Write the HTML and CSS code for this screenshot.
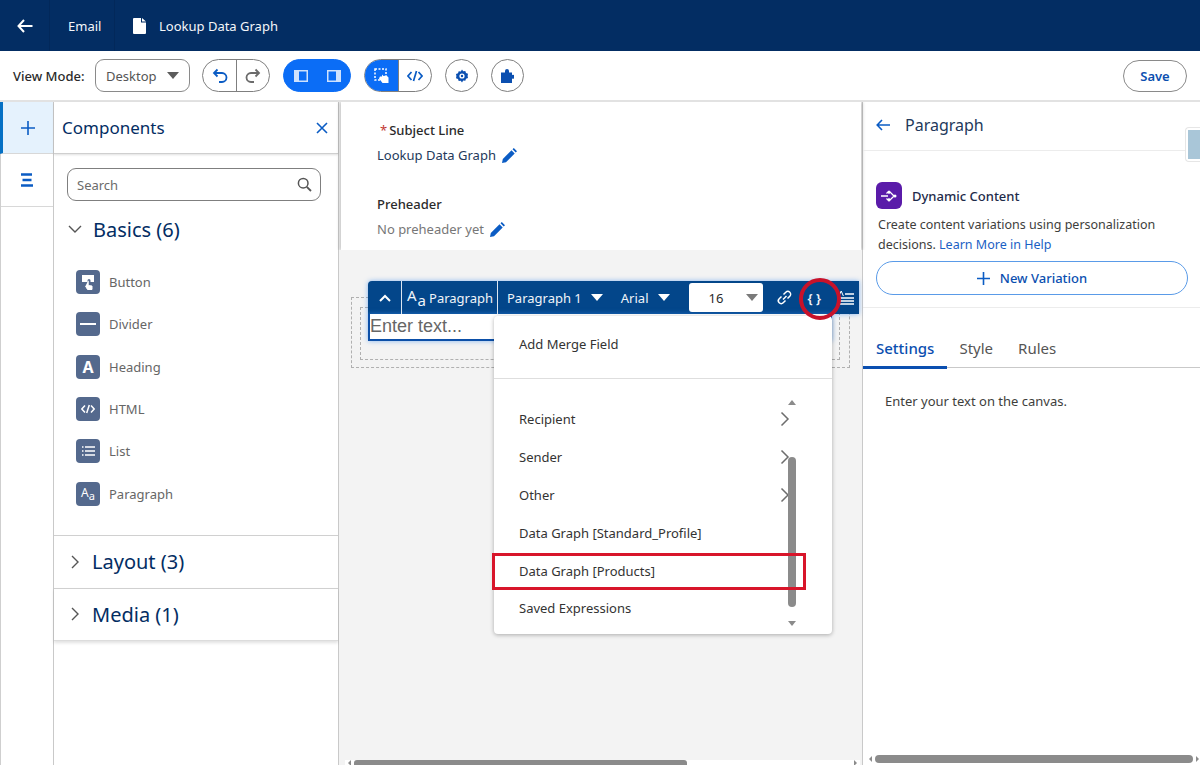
FILE: index.html
```html
<!DOCTYPE html>
<html lang="en">

<head>
    <meta charset="UTF-8">
    <title>Lookup Data Graph</title>
    <link rel="stylesheet" href="styles.css">
</head>

<body>

    <header class="topbar">
        <div class="top-back">
            <svg width="16" height="14" viewBox="0 0 16 14"><path d="M7 1 1.5 7 7 13M2 7h13.5" fill="none" stroke="#fff" stroke-width="2"/></svg>
        </div>
        <div class="top-cell">Email</div>
        <div class="top-title">
            <svg width="13" height="16" viewBox="0 0 13 16"><path d="M1 0h7v4.500h5V15a1 1 0 0 1-1 1H1a1 1 0 0 1-1-1V1a1 1 0 0 1 1-1ZM9 0l4 3.500H9Z" fill="#fff"/></svg>
            <span>Lookup Data Graph</span>
        </div>
    </header>

    <div class="toolbar">
        <span class="view-label">View Mode:</span>
        <div class="select">
            <span>Desktop</span>
            <i class="caret"></i>
        </div>
        <div class="group">
            <div class="seg">
                <svg width="16" height="16" viewBox="0 0 16 16"><path d="M5.500 1.500 2 5l3.500 3.500M2.500 5H10a4.500 4.500 0 0 1 0 9H7" fill="none" stroke="#0b5cc4" stroke-width="1.800"/></svg>
            </div>
            <div class="seg">
                <svg width="16" height="16" viewBox="0 0 16 16"><path d="M10.500 1.500 14 5l-3.500 3.500M13.500 5H6a4.500 4.500 0 0 0 0 9h3" fill="none" stroke="#6b6b6b" stroke-width="1.800"/></svg>
            </div>
        </div>
        <div class="group group-blue">
            <div class="seg">
                <svg width="14" height="12" viewBox="0 0 14 12"><rect width="14" height="12" fill="#cfe2fd"/><rect x="5" y="1.500" width="7.500" height="9" fill="#0b6df6"/></svg>
            </div>
            <div class="seg">
                <svg width="14" height="12" viewBox="0 0 14 12"><rect width="14" height="12" fill="#cfe2fd"/><rect x="1.500" y="1.500" width="7.500" height="9" fill="#0b6df6"/></svg>
            </div>
        </div>
        <div class="group group-half">
            <div class="seg seg-on">
                <svg width="16" height="16" viewBox="0 0 16 16"><rect x="1" y="1" width="11" height="11" fill="none" stroke="#fff" stroke-width="1.500" stroke-dasharray="2 1.500"/><path d="M6 8.500h2V6.500l1.500 1.500 3-.5 2 2V15H8.500L5 10.500Z" fill="#fff"/></svg>
            </div>
            <div class="seg">
                <svg width="16" height="12" viewBox="0 0 16 12"><path d="M4.500 2 1 6l3.500 4M11.500 2 15 6l-3.500 4M9.500 1 6.500 11" fill="none" stroke="#0b5cc4" stroke-width="1.700"/></svg>
            </div>
        </div>
        <div class="round">
            <svg width="14" height="14" viewBox="0 0 14 14"><path d="M7 .500l1.200 1.700 2.100-.3.700 2 2 .8-.4 2.300.4 2-2 .8-.7 2-2.100-.3L7 13.500l-1.200-1.700-2.100.3-.7-2-2-.8.4-2.300-.4-2 2-.8.700-2 2.100.3Z" fill="#0b4fb0"/><circle cx="7" cy="7" r="2.600" fill="#fff"/><circle cx="7" cy="7" r="1.200" fill="#0b4fb0"/></svg>
        </div>
        <div class="round round-last">
            <svg width="13" height="15" viewBox="0 0 13 15"><path d="M0 4.500h4V3a2 2 0 1 1 4 0v1.500h3V7a2 2 0 1 1 0 3.500V15H0Z" fill="#0b4fb0"/></svg>
        </div>
        <div class="save">Save</div>
    </div>

    <main class="workspace">

        <nav class="rail">
            <div class="rail-cell rail-on">
                <svg width="14" height="14" viewBox="0 0 14 14"><path d="M7 0v14M0 7h14" stroke="#0b5cc4" stroke-width="1.600"/></svg>
            </div>
            <div class="rail-cell">
                <svg width="14" height="14" viewBox="0 0 14 14"><path d="M1 1.500h11M2.500 7h9M1 12.500h12" stroke="#0b5cc4" stroke-width="2.400"/></svg>
            </div>
        </nav>

        <aside class="components">
            <div class="comp-head">
                <h2>Components</h2>
                <svg width="12" height="12" viewBox="0 0 12 12"><path d="M1 1l10 10M11 1 1 11" stroke="#0b5cc4" stroke-width="1.600"/></svg>
            </div>
            <div class="comp-body">
                <div class="search">
                    <span>Search</span>
                    <svg width="15" height="15" viewBox="0 0 15 15"><circle cx="6.200" cy="6.200" r="4.800" fill="none" stroke="#555" stroke-width="1.500"/><path d="M9.800 9.800 14 14" stroke="#555" stroke-width="1.800"/></svg>
                </div>
                <div class="sec-title sec-open">
                    <svg width="14" height="8" viewBox="0 0 14 8"><path d="M1 1l6 6 6-6" fill="none" stroke="#555" stroke-width="1.400"/></svg>
                    <span>Basics (6)</span>
                </div>
                <ul class="items">
                    <li>
                        <span class="ico"><svg width="14" height="16" viewBox="0 0 14 16"><path d="M1 1h12v7H9.500V6.500a1.500 1.500 0 0 0-3 0V8H1Z" fill="#fff"/><path d="M7.200 6.800v4.700l3.800.5v3.500H6.500L4.500 12" fill="#fff" stroke="#fff"/></svg></span>
                        Button
                    </li>
                    <li>
                        <span class="ico"><svg width="16" height="2" viewBox="0 0 16 2"><rect width="16" height="2" fill="#fff"/></svg></span>
                        Divider
                    </li>
                    <li>
                        <span class="ico ico-a">A</span>
                        Heading
                    </li>
                    <li>
                        <span class="ico"><svg width="14" height="10" viewBox="0 0 14 10"><path d="M4 1.500.8 5 4 8.500M10 1.500 13.200 5 10 8.500M8.300 1 5.700 9" fill="none" stroke="#fff" stroke-width="1.500"/></svg></span>
                        HTML
                    </li>
                    <li>
                        <span class="ico"><svg width="13" height="10" viewBox="0 0 13 10"><path d="M3 1h10M3 5h10M3 9h10M0 1h1.500M0 5h1.500M0 9h1.500" stroke="#fff" stroke-width="1.400"/></svg></span>
                        List
                    </li>
                    <li>
                        <span class="ico ico-aa">A<small>a</small></span>
                        Paragraph
                    </li>
                </ul>
                <div class="sec-title sec-row">
                    <svg width="8" height="14" viewBox="0 0 8 14"><path d="M1 1l6 6-6 6" fill="none" stroke="#555" stroke-width="1.400"/></svg>
                    <span>Layout (3)</span>
                </div>
                <div class="sec-title sec-row sec-last">
                    <svg width="8" height="14" viewBox="0 0 8 14"><path d="M1 1l6 6-6 6" fill="none" stroke="#555" stroke-width="1.400"/></svg>
                    <span>Media (1)</span>
                </div>
            </div>
        </aside>

        <section class="canvas">
            <div class="meta">
                <div class="meta-label"><b class="req">*</b>Subject Line</div>
                <div class="meta-value">
                    Lookup Data Graph
                    <svg class="pencil" width="15" height="15" viewBox="0 0 15 15"><path d="M0 15l.8-4L9.500 2.300l3.200 3.200L4 14.200ZM10.500 1.300 11.800 0 15 3.200l-1.300 1.300Z" fill="#0b5cc4"/></svg>
                </div>
                <div class="meta-label meta-second">Preheader</div>
                <div class="meta-value meta-empty">
                    No preheader yet
                    <svg class="pencil" width="15" height="15" viewBox="0 0 15 15"><path d="M0 15l.8-4L9.500 2.300l3.200 3.200L4 14.200ZM10.500 1.300 11.800 0 15 3.200l-1.300 1.300Z" fill="#0b5cc4"/></svg>
                </div>
            </div>

            <div class="stage">
                <div class="drop-outer">
                    <div class="drop-inner"></div>
                </div>

                <div class="editor">
                    <div class="rte">
                        <div class="rte-up">
                            <svg width="12" height="8" viewBox="0 0 12 8"><path d="M1 7l5-5 5 5" fill="none" stroke="#fff" stroke-width="2"/></svg>
                        </div>
                        <div class="rte-type"><span class="rte-aa">A<small>a</small></span> Paragraph</div>
                        <div class="rte-pick">Paragraph 1 <i class="caret caret-white"></i></div>
                        <div class="rte-pick rte-font">Arial <i class="caret caret-white"></i></div>
                        <div class="rte-size">
                            <span>16</span>
                            <i class="caret caret-size"></i>
                        </div>
                        <svg class="rte-link" width="15" height="15" viewBox="0 0 15 15"><path d="M6 9.500l3.500-3.500M6.500 4.500 8.800 2.200a2.800 2.800 0 0 1 4 4L10.500 8.500M8.500 10.500l-2.300 2.300a2.800 2.800 0 0 1-4-4L4.500 6.500" fill="none" stroke="#fff" stroke-width="1.500"/></svg>
                        <span class="rte-braces">{ }</span>
                        <div class="rte-align">
                            <svg width="16" height="14" viewBox="0 0 16 14"><path d="M0 7h16M0 10h16M0 13h16" stroke="#fff" stroke-width="1.400"/><path d="M1 5l2.200-5 2.200 5" fill="none" stroke="#fff" stroke-width="1"/><path d="M7 3h9" stroke="#fff" stroke-width="1.400"/></svg>
                        </div>
                    </div>
                    <div class="text-box">Enter text...</div>
                </div>

                <div class="merge-menu">
                    <div class="merge-top">Add Merge Field</div>
                    <div class="merge-list">
                        <ul>
                            <li>Recipient <svg width="10" height="16" viewBox="0 0 10 16"><path d="M1.500 1.500 8 8l-6.500 6.500" fill="none" stroke="#6d6d6d" stroke-width="1.500"/></svg></li>
                            <li>Sender <svg width="10" height="16" viewBox="0 0 10 16"><path d="M1.500 1.500 8 8l-6.500 6.500" fill="none" stroke="#6d6d6d" stroke-width="1.500"/></svg></li>
                            <li>Other <svg width="10" height="16" viewBox="0 0 10 16"><path d="M1.500 1.500 8 8l-6.500 6.500" fill="none" stroke="#6d6d6d" stroke-width="1.500"/></svg></li>
                            <li>Data Graph [Standard_Profile]</li>
                            <li>Data Graph [Products]</li>
                            <li>Saved Expressions</li>
                        </ul>
                        <div class="vscroll">
                            <i class="tri-up"></i>
                            <div class="vtrack"><div class="vthumb"></div></div>
                            <i class="tri-down"></i>
                        </div>
                    </div>
                </div>

                <div class="mark-rect"></div>
                <div class="mark-circle"></div>

                <div class="hscroll hscroll-canvas">
                    <i class="tri-left"></i>
                    <div class="hthumb"></div>
                    <i class="tri-right"></i>
                </div>
            </div>
        </section>

        <aside class="props">
            <div class="props-head">
                <svg width="14" height="12" viewBox="0 0 14 12"><path d="M6 1 1.200 6 6 11M1.500 6H14" fill="none" stroke="#0b5cc4" stroke-width="1.600"/></svg>
                <h2>Paragraph</h2>
            </div>
            <div class="collapse"><i></i></div>
            <div class="dyn">
                <div class="dyn-title">
                    <span class="dyn-ico">
                        <svg width="18" height="16" viewBox="0 0 18 16"><path d="M1 8h7M9 3l5 5-5 5M9 3 6.500 5.500M9 13l-2.500-2.500M9 3v3M9 13v-3" fill="none" stroke="#fff" stroke-width="1.300"/><circle cx="15" cy="8" r="1.500" fill="#fff"/></svg>
                    </span>
                    <b>Dynamic Content</b>
                </div>
                <p>Create content variations using personalization decisions. <a>Learn More in Help</a></p>
                <div class="variation">
                    <svg width="13" height="13" viewBox="0 0 13 13"><path d="M6.500 0v13M0 6.500h13" stroke="#0b5cc4" stroke-width="1.600"/></svg>
                    New Variation
                </div>
            </div>
            <div class="tabs">
                <span class="tab tab-on">Settings</span>
                <span class="tab">Style</span>
                <span class="tab">Rules</span>
            </div>
            <div class="tab-body">Enter your text on the canvas.</div>
            <div class="hscroll hscroll-props">
                <i class="tri-left"></i>
                <div class="hthumb"></div>
                <i class="tri-right"></i>
            </div>
        </aside>

    </main>

</body>

</html>
```

FILE: styles.css
```css
* {
    box-sizing: border-box;
}

html,
body {
    height: 100%;
}

body {
    margin: 0;
    display: flex;
    flex-direction: column;
    height: 765px;
    overflow: hidden;
    background-color: #fff;
    color: #181818;
    font-family: "Noto Sans", "Open Sans", sans-serif;
    font-size: 13px;
}

h2 {
    margin: 0;
    font-weight: 400;
}

ul {
    list-style: none;
    margin: 0;
    padding: 0;
}

/* top navy bar */
.topbar {
    display: flex;
    align-items: stretch;
    height: 51px;
    flex-shrink: 0;
    background-color: #032d63;
    color: #f3f6fa;
}

.top-back {
    display: flex;
    justify-content: center;
    align-items: center;
    width: 50px;
    border-right: 1px solid #02285a;
}

.top-cell {
    display: flex;
    align-items: center;
    width: 65px;
    padding-left: 18px;
    border-right: 1px solid #02285a;
}

.top-title {
    display: flex;
    align-items: center;
    gap: 13px;
    padding-left: 18px;
}

/* editor toolbar */
.toolbar {
    display: flex;
    align-items: center;
    height: 51px;
    flex-shrink: 0;
    padding: 0 13px;
    border-bottom: 2px solid #e2e2e2;
}

.view-label {
    width: 82px;
    font-weight: 500;
    color: #2b2b2b;
}

.select {
    display: flex;
    align-items: center;
    justify-content: space-between;
    width: 95px;
    height: 33px;
    padding: 0 10px 0 10px;
    border: 1px solid #8a8a8a;
    border-radius: 9px;
    color: #555;
}

.caret {
    display: inline-block;
    width: 0;
    height: 0;
    border-left: 6px solid transparent;
    border-right: 6px solid transparent;
    border-top: 7px solid #5c5c5c;
}

.group {
    display: flex;
    height: 33px;
    margin-left: 12px;
    border: 1px solid #7f7f7f;
    border-radius: 17px;
    overflow: hidden;
}

.group + .group {
    margin-left: 13px;
}

.seg {
    display: flex;
    justify-content: center;
    align-items: center;
    width: 33px;
}

.seg + .seg {
    border-left: 1px solid #7f7f7f;
}

.group-blue {
    background-color: #0b6df6;
    border-color: #0b6df6;
}

.group-blue .seg + .seg {
    border-left: 0;
}

.seg-on {
    background-color: #0b6df6;
}

.round {
    display: flex;
    justify-content: center;
    align-items: center;
    width: 33px;
    height: 33px;
    margin-left: 13px;
    border: 1px solid #7f7f7f;
    border-radius: 50%;
}

.save {
    display: flex;
    justify-content: center;
    align-items: center;
    width: 64px;
    height: 32px;
    margin-left: auto;
    border: 1px solid #8a8a8a;
    border-radius: 16px;
    color: #0b4fb0;
    font-weight: 600;
}

/* three columns under the toolbar */
.workspace {
    display: flex;
    flex: 1;
    min-height: 0;
}

.rail {
    width: 54px;
    flex-shrink: 0;
    border-left: 1px solid #cfcfcf;
    border-right: 1px solid #c9c9c9;
}

.rail-cell {
    display: flex;
    justify-content: center;
    align-items: center;
    height: 53px;
    border-bottom: 1px solid #d8d8d8;
}

.rail-on {
    height: 52px;
    background-color: #e5f2fd;
    border-left: 3px solid #0570c4;
    margin-left: -1px;
}

.components {
    width: 285px;
    flex-shrink: 0;
    border-right: 1px solid #c9c9c9;
}

.comp-head {
    display: flex;
    justify-content: space-between;
    align-items: center;
    height: 52px;
    padding: 0 10px 0 8px;
    border-bottom: 1px solid #cfcfcf;
    box-shadow: 0 1px 2px rgba(0, 0, 0, 0.12);
}

.comp-head h2 {
    font-size: 17px;
    color: #032d63;
}

.comp-body {
    padding-top: 14px;
}

.search {
    display: flex;
    justify-content: space-between;
    align-items: center;
    height: 33px;
    margin: 0 17px 0 13px;
    padding: 0 8px 0 9px;
    border: 1px solid #7f7f7f;
    border-radius: 9px;
    color: #6b6b6b;
}

.sec-title {
    display: flex;
    align-items: center;
    font-size: 20px;
    color: #032d63;
}

.sec-title span {
    margin-left: 11px;
}

.sec-open {
    height: 56px;
    padding-left: 14px;
}

.sec-row {
    height: 53px;
    padding-left: 17px;
    border-top: 1px solid #d0d0d0;
}

.sec-row span {
    margin-left: 13px;
}

.sec-row:first-of-type {
    border-top-width: 2px;
}

.sec-last {
    border-bottom: 1px solid #dcdcdc;
    box-shadow: 0 2px 3px rgba(0, 0, 0, 0.12);
}

.items {
    padding: 4px 0 20px 22px;
}

.items li {
    display: flex;
    align-items: center;
    gap: 9px;
    height: 42.300px;
    color: #666;
}

.ico {
    display: flex;
    justify-content: center;
    align-items: center;
    width: 24px;
    height: 24px;
    border-radius: 4px;
    background-color: #54698d;
    color: #fff;
}

.ico-a {
    font-size: 16px;
    font-weight: 700;
}

.ico-aa {
    font-size: 12px;
    padding-bottom: 3px;
}

.ico-aa small {
    font-size: 11px;
    margin-top: 6px;
}

/* canvas */
.canvas {
    display: flex;
    flex-direction: column;
    width: 524px;
    flex-shrink: 0;
    background-color: #f3f3f3;
    border-right: 1px solid #c9c9c9;
}

.meta {
    height: 148px;
    margin: 0 1px 0 2px;
    padding: 19px 0 0 36px;
    background-color: #fff;
    box-shadow: -2px 0 3px rgba(0, 0, 0, 0.15), 2px 0 3px rgba(0, 0, 0, 0.15);
    clip-path: inset(0 -6px 0 -6px);
}

.meta-label {
    height: 18px;
    line-height: 18px;
    font-weight: 500;
    color: #2b2b2b;
}

.req {
    margin: 0 2px 0 3px;
    font-weight: 400;
    color: #c23934;
}

.meta-value {
    display: flex;
    align-items: center;
    gap: 6px;
    height: 24px;
    margin-top: 4px;
    color: #23395b;
}

.meta-second {
    margin-top: 28px;
}

.meta-empty {
    color: #777;
}

.stage {
    position: relative;
    flex: 1;
    padding: 47px 11px 0 12px;
}

.drop-outer {
    width: 499px;
    height: 71px;
    padding: 9px 9px 0 8px;
    border: 1px dashed #b0b0b0;
}

.drop-inner {
    height: 53px;
    border: 1px dashed #b0b0b0;
}

.editor {
    position: absolute;
    top: 31px;
    left: 29px;
    width: 491px;
}

.rte {
    display: flex;
    align-items: center;
    height: 33px;
    background-color: #03468a;
    border-radius: 4px 0 0 0;
    color: #f0f4f9;
    box-shadow: 0 0 5px rgba(60, 140, 240, 0.6);
    overflow: hidden;
}

.rte-up {
    display: flex;
    justify-content: center;
    align-items: center;
    width: 34px;
    height: 100%;
    border-right: 1px solid #dce6f0;
}

.rte-type {
    display: flex;
    align-items: center;
    gap: 3px;
    width: 96px;
    height: 100%;
    padding-left: 5px;
    border-right: 1px solid #dce6f0;
}

.rte-aa {
    font-size: 15px;
    line-height: 1;
    margin-top: -5px;
}

.rte-aa small {
    font-size: 15px;
    position: relative;
    top: 5px;
    margin-left: 1px;
}

.rte-pick {
    display: flex;
    align-items: center;
    gap: 9px;
    margin-left: 9px;
}

.rte-font {
    margin-left: 18px;
}

.caret-white {
    border-top-color: #fff;
}

.rte-size {
    display: flex;
    align-items: center;
    justify-content: space-between;
    width: 74px;
    height: 29px;
    margin-left: 19px;
    padding: 0 5px 0 20px;
    background-color: #fff;
    border-radius: 3px;
    color: #2b2b2b;
}

.caret-size {
    border-top-color: #7a7a7a;
    margin-right: 0;
}

.rte-link {
    margin-left: 14px;
}

.rte-braces {
    width: 14px;
    margin-left: 16px;
    font-weight: 600;
    white-space: nowrap;
}

.rte-align {
    margin-left: 16px;
    display: flex;
}

.text-box {
    width: 464px;
    height: 27px;
    padding-left: 0;
    border: 2px solid #0b4fa8;
    border-top: 0;
    background-color: #fff;
    box-shadow: 0 0 5px rgba(60, 140, 240, 0.6);
    font-family: "Liberation Sans", Arial, sans-serif;
    font-size: 18px;
    line-height: 25px;
    color: #666;
}

.merge-menu {
    position: absolute;
    top: 66px;
    left: 155px;
    width: 338px;
    height: 318px;
    background-color: #fff;
    border-radius: 4px;
    box-shadow: 0 1px 4px rgba(0, 0, 0, 0.3);
}

.merge-top {
    height: 63px;
    padding: 18px 0 0 25px;
    line-height: 20px;
    border-bottom: 1px solid #dedede;
    color: #333;
}

.merge-list {
    display: flex;
    padding-top: 21px;
}

.merge-list ul {
    width: 296px;
    padding-left: 25px;
}

.merge-list li {
    display: flex;
    justify-content: space-between;
    align-items: center;
    height: 37.900px;
    color: #333;
}

.vscroll {
    display: flex;
    flex-direction: column;
    align-items: center;
    width: 10px;
    height: 226px;
    margin: 0 0 0 -3px;
}

.tri-up,
.tri-down {
    width: 0;
    height: 0;
    border-left: 4px solid transparent;
    border-right: 4px solid transparent;
}

.tri-up {
    border-bottom: 5px solid #8b8b8b;
}

.tri-down {
    border-top: 5px solid #8b8b8b;
}

.vtrack {
    flex: 1;
    width: 8px;
    padding-top: 52px;
}

.vthumb {
    height: 150px;
    background-color: #8b8b8b;
    border-radius: 4px;
}

/* red annotations on top of the screenshot */
.mark-rect {
    position: absolute;
    top: 303px;
    left: 153px;
    width: 314px;
    height: 37px;
    border: 3px solid #d8152a;
}

.mark-circle {
    position: absolute;
    top: 28px;
    left: 460px;
    width: 42px;
    height: 42px;
    border: 4px solid #c8122a;
    border-radius: 50%;
}

.hscroll {
    display: flex;
    align-items: center;
    position: absolute;
    height: 8px;
}

.hscroll-canvas {
    left: 6px;
    right: 2px;
    bottom: 0;
    background-color: #fff;
    height: 5px;
    align-items: flex-start;
    padding: 0 3px;
}

.hscroll-canvas .hthumb {
    width: 333px;
    height: 5px;
    margin-left: 3px;
    border-radius: 3px 3px 0 0;
}

.hscroll-canvas .tri-right {
    margin-left: auto;
}

.hscroll-props {
    left: 6px;
    right: 1px;
    bottom: 2px;
}

.hscroll-props .hthumb {
    flex: 1;
    height: 8px;
    margin: 0 3px;
    border-radius: 4px;
}

.hthumb {
    background-color: #8b8b8b;
}

.tri-left,
.tri-right {
    width: 0;
    height: 0;
    border-top: 3px solid transparent;
    border-bottom: 3px solid transparent;
}

.tri-left {
    border-right: 3px solid #8b8b8b;
}

.tri-right {
    border-left: 3px solid #8b8b8b;
}

/* right panel */
.props {
    position: relative;
    flex: 1;
    min-width: 0;
}

.props-head {
    display: flex;
    align-items: center;
    gap: 15px;
    height: 49px;
    padding: 0 0 2px 13px;
    border-bottom: 1px solid #ececec;
}

.props-head h2 {
    font-size: 16px;
    color: #23395b;
}

.collapse {
    position: absolute;
    top: 25px;
    right: 0;
    width: 15px;
    height: 35px;
    padding: 2px 0 2px 2px;
    background-color: #fff;
    border: 1px solid #e6e6e6;
    border-right: 0;
    border-radius: 4px 0 0 4px;
}

.collapse i {
    display: block;
    height: 100%;
    background-color: #a9c6d8;
}

.dyn {
    height: 157px;
    padding: 31px 12px 0 13px;
    border-bottom: 1px solid #ececec;
}

.dyn-title {
    display: flex;
    align-items: center;
    gap: 10px;
}

.dyn-title b {
    font-weight: 500;
    color: #1e2b4a;
}

.dyn-ico {
    display: flex;
    justify-content: center;
    align-items: center;
    width: 26px;
    height: 27px;
    background-color: #5a1ba9;
    border-radius: 6px;
}

.dyn p {
    margin: 6px 0 6px 2px;
    font-size: 12.500px;
    line-height: 20px;
    color: #3e3e3c;
}

.dyn a {
    color: #1b5fc4;
}

.variation {
    display: flex;
    justify-content: center;
    align-items: center;
    gap: 10px;
    height: 34px;
    border: 1px solid #5a9be8;
    border-radius: 17px;
    color: #0b4fb0;
    font-weight: 500;
}

.tabs {
    display: flex;
    height: 60px;
    padding-left: 13px;
    border-bottom: 1px solid #c9c9c9;
}

.tab {
    display: flex;
    align-items: center;
    height: 60px;
    padding-top: 19px;
    margin-right: 25px;
    font-size: 15px;
    color: #555;
}

.tab-on {
    position: relative;
    font-weight: 500;
    color: #0b4fb0;
}

.tab-on::after {
    content: '';
    position: absolute;
    left: -13px;
    right: -13px;
    bottom: -1px;
    height: 3px;
    background-color: #0b4fb0;
}

.tab-body {
    padding: 24px 0 0 22px;
    color: #3e3e3c;
}
```
